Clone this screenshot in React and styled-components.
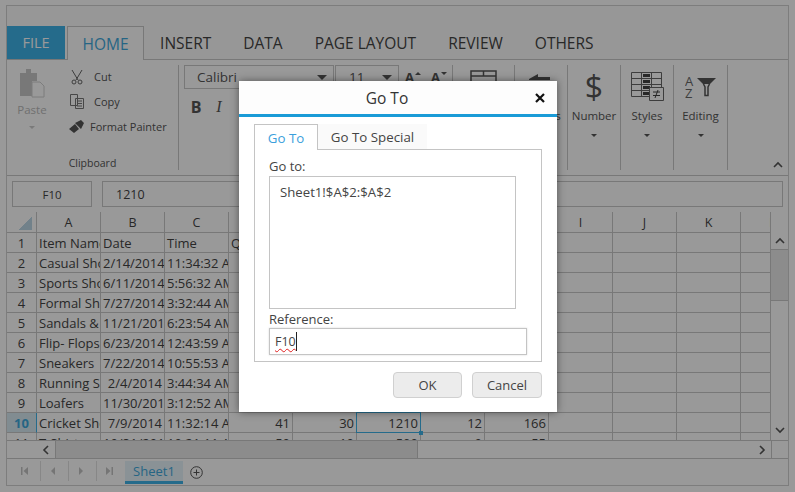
import React from "react";
import styled, { createGlobalStyle } from "styled-components";

const columns = ["A", "B", "C", "D", "E", "F", "G", "H", "I", "J", "K", "L"];
const rows = [
  ["Item Name", "Date", "Time", "Quantity"],
  ["Casual Shoes", "2/14/2014", "11:34:32 AM"],
  ["Sports Shoes", "6/11/2014", "5:56:32 AM"],
  ["Formal Shoes", "7/27/2014", "3:32:44 AM"],
  ["Sandals &", "11/21/2014", "6:23:54 AM"],
  ["Flip- Flops", "6/23/2014", "12:43:59 AM"],
  ["Sneakers", "7/22/2014", "10:55:53 AM"],
  ["Running Shoes", "2/4/2014", "3:44:34 AM"],
  ["Loafers", "11/30/2014", "3:12:52 AM"],
  ["Cricket Shoes", "7/9/2014", "11:32:14 AM", "41", "30", "1210", "12", "166"],
  ["T-Shirts", "10/31/2014", "10:21:11 AM", "50", "10", "500", "9", "55"],
];
const rightAligned = { "2/4/2014": true, "7/9/2014": true };

const GlobalStyle = createGlobalStyle`
  html, body {
    margin: 0;
    height: 100%;
    overflow: hidden;
    background: #fff;
    font-family: "Open Sans", "Liberation Sans", sans-serif;
  }
  * { box-sizing: border-box; }
`;

const Page = styled.div`
  width: 795px;
  height: 492px;
  position: relative;
  overflow: hidden;
  background: #fff;
  padding: 5px 0 0 6px;
`;
const Sheet = styled.div`
  width: 783px;
  height: 481px;
  background: #fff;
  border: 1px solid #d0d0d0;
  display: flex;
  flex-direction: column;
  isolation: isolate;
`;
const TabBar = styled.div`
  height: 54px;
  flex: none;
  padding-top: 20px;
  display: flex;
  align-items: flex-start;
  background: #fcfcfc;
  border-bottom: 1px solid #c8c8c8;
`;
const FileTab = styled.div`
  width: 58px;
  height: 33px;
  background: #3fb2e8;
  color: #fff;
  font-size: 14.5px;
  display: flex;
  align-items: center;
  justify-content: center;
`;
const Tab = styled.div`
  padding: 0 ${(p) => (p.$active ? "14.500px" : "16px")};
  height: 34px;
  margin-left: ${(p) => (p.$active ? "2px" : 0)};
  font-size: 15.5px;
  display: flex;
  align-items: center;
  color: ${(p) => (p.$active ? "#3fa9dd" : "#444")};
  background: ${(p) => (p.$active ? "#fff" : "transparent")};
  border: ${(p) => (p.$active ? "1px solid #c8c8c8" : "0")};
  border-bottom: 0;
`;
const Ribbon = styled.div`
  height: 116px;
  flex: none;
  display: flex;
  position: relative;
  border-bottom: 1px solid #c8c8c8;
  padding-top: 5px;
`;
const Group = styled.div`
  width: ${(p) => p.$w}px;
  height: 105px;
  border-right: 1px solid #c8c8c8;
  flex: none;
  display: flex;
  flex-direction: column;
  align-items: center;
  font-size: 12px;
  color: #555;
`;
const Clipboard = styled(Group)`
  align-items: stretch;
`;
const ClipTools = styled.div`
  display: flex;
  height: 93px;
`;
const PasteCol = styled.div`
  width: 50px;
  display: flex;
  flex-direction: column;
  align-items: center;
  color: #bbb;
  padding-top: 3px;
  font-size: 11.5px;
  gap: 3px;
`;
const ClipList = styled.div`
  display: flex;
  flex-direction: column;
  gap: 6px;
  margin-left: 13px;
  padding-top: 2px;
  font-size: 11px;
`;
const ClipItem = styled.div`
  height: 19px;
  display: flex;
  align-items: center;
  gap: ${(p) => (p.$brush ? "6px" : "10px")};
  margin-left: ${(p) => (p.$brush ? "-1px" : 0)};
  white-space: nowrap;
`;
const GroupName = styled.div`
  text-align: center;
  font-size: 10.5px;
  padding-top: 2px;
`;
const FontCol = styled.div`
  padding: 0 0 0 5px;
  width: 100%;
  display: flex;
  flex-direction: column;
  gap: 8px;
  font-size: 13.5px;
`;
const FontRow = styled.div`
  display: flex;
  gap: ${(p) => p.$gap}px;
  align-items: center;
  padding-left: ${(p) => p.$pad || 0}px;
`;
const FontBox = styled.div`
  width: ${(p) => p.$w}px;
  height: 24px;
  border: 1px solid #c8c8c8;
  display: flex;
  align-items: center;
  justify-content: space-between;
  padding: 0 6px 0 ${(p) => p.$pad}px;
  flex: none;
`;
const StyleGlyph = styled.span`
  font-family: ${(p) => (p.$i ? '"Liberation Serif", serif' : '"Open Sans", sans-serif')};
  font-size: 16px;
  height: 20px;
  line-height: 20px;
  width: 20px;
  text-align: center;
  font-weight: ${(p) => (p.$b ? 700 : 400)};
  font-style: ${(p) => (p.$i ? "italic" : "normal")};
`;
const SizeGlyph = styled.span`
  font-size: 13px;
  font-weight: 700;
  width: 22px;
  margin-left: ${(p) => p.$left}px;
  flex: none;
  display: flex;
  align-items: flex-start;
  gap: 1px;
`;
const MiniCaret = styled.span`
  margin-top: 4px;
  width: 0;
  height: 0;
  border-left: 3px solid transparent;
  border-right: 3px solid transparent;
  border-${(p) => (p.$up ? "bottom" : "top")}: 3px solid #555;
`;
const BigGroup = styled(Group)`
  padding-top: 5px;
`;
const BigIcon = styled.div`
  height: 33px;
  display: flex;
  align-items: ${(p) => (p.$top ? "flex-start" : "center")};
  justify-content: center;
  font-size: ${(p) => p.$size || 12}px;
`;
const BigLabel = styled.div`
  margin-top: 5px;
  font-size: 11.5px;
  white-space: nowrap;
`;
const Caret = styled.div`
  margin-top: ${(p) => (p.$box ? 0 : "11px")};
  width: 0;
  height: 0;
  border-left: ${(p) => (p.$box ? 5 : 3)}px solid transparent;
  border-right: ${(p) => (p.$box ? 5 : 3)}px solid transparent;
  border-top: ${(p) => (p.$box ? 5 : 3)}px solid #555;
`;
const PasteCaret = styled(Caret)`
  margin-top: 6px;
  border-top-color: #ccc;
`;
const Collapse = styled.div`
  position: absolute;
  right: 5px;
  bottom: 5px;
  width: 10px;
  height: 10px;
  display: flex;
`;
const FormulaBar = styled.div`
  height: 36px;
  flex: none;
  display: flex;
  padding: 5px;
  gap: 10px;
`;
const NameBox = styled.div`
  width: 80px;
  height: 26px;
  border: 1px solid #c8c8c8;
  font-size: 11.5px;
  color: #444;
  display: flex;
  align-items: center;
  justify-content: center;
`;
const FormulaBox = styled.div`
  flex: 1;
  height: 26px;
  border: 1px solid #c8c8c8;
  font-size: 12.5px;
  color: #444;
  display: flex;
  align-items: center;
  padding-left: 13px;
`;
const GridWrap = styled.div`
  height: 228px;
  flex: none;
  display: flex;
`;
const GridArea = styled.div`
  width: 763px;
  flex: none;
  overflow: hidden;
  display: grid;
  grid-template-columns: 30px repeat(12, 64px);
  grid-template-rows: 21px;
  grid-auto-rows: 20px;
  align-content: start;
  font-size: 13px;
  color: #444;
`;
const Corner = styled.div`
  background: linear-gradient(135deg, transparent 50%, #bcd7e6 50%) no-repeat 12px 5px / 13px 13px;
  border-right: 1px solid #c8c8c8;
  border-bottom: 1px solid #c8c8c8;
`;
const ColHead = styled.div`
  border-right: 1px solid #c8c8c8;
  border-bottom: 1px solid #c8c8c8;
  font-size: 12.5px;
  display: flex;
  align-items: center;
  justify-content: center;
`;
const RowHead = styled.div`
  display: flex;
  align-items: center;
  justify-content: center;
  font-size: 13px;
  border-right: 1px solid ${(p) => (p.$active ? "#3fb2e8" : "#c8c8c8")};
  border-bottom: 1px solid #c8c8c8;
  background: ${(p) => (p.$active ? "#d8e9f2" : "transparent")};
  color: ${(p) => (p.$active ? "#3fa9dd" : "#444")};
  font-weight: ${(p) => (p.$active ? 700 : 400)};
`;
const Cell = styled.div`
  position: relative;
  border-right: 1px solid #c8c8c8;
  border-bottom: 1px solid #c8c8c8;
  white-space: nowrap;
  overflow: ${(p) => (p.$sel ? "visible" : "hidden")};
  padding: 0 2px;
  display: flex;
  align-items: center;
  justify-content: ${(p) => (p.$right ? "flex-end" : "flex-start")};
`;
const Selected = styled.div`
  position: absolute;
  z-index: 1;
  inset: -1px;
  border: 1px solid #3fb2e8;
`;
const Handle = styled.div`
  position: absolute;
  right: -3px;
  bottom: -3px;
  width: 4px;
  height: 4px;
  background: #3fb2e8;
`;
const VScroll = styled.div`
  flex: 1;
  border-left: 1px solid #c8c8c8;
  display: flex;
  flex-direction: column;
  align-items: center;
`;
const ArrowTop = styled.div`
  height: 37px;
  padding-bottom: 3px;
  display: flex;
  align-items: flex-end;
  justify-content: center;
`;
const ArrowBottom = styled.div`
  height: 21px;
  display: flex;
  align-items: center;
  justify-content: center;
  margin-top: auto;
`;
const Thumb = styled.div`
  width: 100%;
  height: 52px;
  background: #eaeaea;
  border-top: 1px solid #c8c8c8;
  border-bottom: 1px solid #c8c8c8;
`;
const HScroll = styled.div`
  height: 19px;
  display: flex;
  border-top: 1px solid #c8c8c8;
  border-bottom: 1px solid #c8c8c8;
  flex: none;
`;
const HSpacer = styled.div`
  width: 30px;
`;
const HArrow = styled.div`
  width: 18px;
  display: flex;
  align-items: center;
  justify-content: center;
`;
const HThumb = styled.div`
  width: 363px;
  flex: none;
  background: #eaeaea;
  border-left: 1px solid #c8c8c8;
  border-right: 1px solid #c8c8c8;
`;
const HTrack = styled.div`
  flex: 1;
`;
const HEnd = styled.div`
  width: 17px;
  border-left: 1px solid #c8c8c8;
`;
const SheetBar = styled.div`
  flex: 1;
  display: flex;
  align-items: flex-start;
  padding: 2px 0 0 6px;
`;
const NavButton = styled.div`
  width: 28px;
  height: 20px;
  padding-right: 4px;
  display: flex;
  align-items: center;
  justify-content: center;
  border-right: 1px solid ${(p) => (p.$last ? "transparent" : "#e2e2e2")};
`;
const SheetTab = styled.div`
  width: 58px;
  height: 23px;
  background: #e6f3fa;
  border-bottom: 3px solid #3fb2e8;
  color: #3fa9dd;
  font-size: 13px;
  display: flex;
  align-items: center;
  justify-content: center;
`;
const AddSheet = styled.div`
  margin: 5px 0 0 7px;
  display: flex;
`;

const Overlay = styled.div`
  position: absolute;
  inset: 0;
  background: rgba(0, 0, 0, 0.4);
`;
const Dialog = styled.div`
  position: absolute;
  left: 239px;
  top: 81px;
  width: 318px;
  height: 331px;
  background: #fff;
  box-shadow: 0 0 8px rgba(0, 0, 0, 0.45);
  display: flex;
  flex-direction: column;
`;
const DialogHead = styled.div`
  height: 36px;
  flex: none;
  background: #fdfdfd;
  border-bottom: 3px solid #1a9bd7;
  padding-right: 22px;
  display: flex;
  align-items: center;
  justify-content: center;
  position: relative;
  font-size: 15.5px;
  color: #333;
`;
const CloseBtn = styled.svg`
  position: absolute;
  right: 12px;
  top: 12px;
`;
const DialogBody = styled.div`
  padding: 7px 15px 0;
  display: flex;
  flex-direction: column;
`;
const DialogTabs = styled.div`
  display: flex;
  height: 25px;
  position: relative;
  z-index: 1;
`;
const DialogTab = styled.div`
  width: ${(p) => p.$w}px;
  height: ${(p) => (p.$active ? "26px" : "25px")};
  font-size: 13.3px;
  display: flex;
  align-items: center;
  justify-content: center;
  color: ${(p) => (p.$active ? "#3b9fdc" : "#444")};
  background: ${(p) => (p.$active ? "#fff" : "#fafafa")};
  border: ${(p) => (p.$active ? "1px solid #c4c4c4" : "0")};
  border-bottom: 0;
`;
const TabPanel = styled.div`
  height: 213px;
  border: 1px solid #c4c4c4;
  padding: 8px 14px 0;
  display: flex;
  flex-direction: column;
  color: #444;
  font-size: 13px;
`;
const Label = styled.div`
  height: 17px;
  line-height: 17px;
`;
const RefArea = styled.div`
  margin-top: 1px;
  width: 247px;
  height: 133px;
  border: 1px solid #c4c4c4;
  padding: 6px 10px;
  line-height: 18px;
  font-size: 13.2px;
`;
const RefLabel = styled(Label)`
  margin-top: 2px;
`;
const RefInput = styled.div`
  width: 258px;
  height: 27px;
  border: 1px solid #c4c4c4;
  box-shadow: 0 0 2px rgba(0, 0, 0, 0.15);
  padding-left: 5px;
  font-size: 12.5px;
  display: flex;
  align-items: center;
`;
const Misspelt = styled.span`
  text-decoration: underline wavy #e02020 1px;
  text-underline-offset: 2px;
`;
const Cursor = styled.span`
  width: 1px;
  height: 19px;
  background: #222;
`;
const Footer = styled.div`
  display: flex;
  justify-content: flex-end;
  gap: 10px;
  margin-top: 10px;
`;
const Btn = styled.div`
  width: ${(p) => p.$w}px;
  height: 26px;
  background: #ececec;
  border: 1px solid #d0d0d0;
  border-radius: 4px;
  font-size: 13px;
  color: #444;
  display: flex;
  align-items: center;
  justify-content: center;
`;

const Chevron = ({ dir }) => {
  const d = { up: "M1 7l4-4 4 4", down: "M1 3l4 4 4-4", left: "M7 1L3 5l4 4", right: "M3 1l4 4-4 4" }[dir];
  return (
    <svg width="10" height="10" viewBox="0 0 10 10">
      <path d={d} fill="none" stroke="#555" strokeWidth="1.6" />
    </svg>
  );
};

function Nav({ kind }) {
  const paths = {
    first: "M1 1h1.500v8H1zM8 1L3.500 5 8 9z",
    prev: "M7 1L3 5l4 4z",
    next: "M3 1l4 4-4 4z",
    last: "M2 1l4.500 4L2 9zM7.500 1H9v8H7.500z",
  };
  return (
    <svg width="10" height="10" viewBox="0 0 10 10">
      <path d={paths[kind]} fill="#c4c4c4" />
    </svg>
  );
}

export default function App() {
  return (
    <Page>
      <GlobalStyle />
      <Sheet>
        <TabBar>
          <FileTab>FILE</FileTab>
          <Tab $active>HOME</Tab>
          <Tab>INSERT</Tab>
          <Tab>DATA</Tab>
          <Tab>PAGE LAYOUT</Tab>
          <Tab>REVIEW</Tab>
          <Tab>OTHERS</Tab>
        </TabBar>
        <Ribbon>
          <Clipboard $w={172}>
            <ClipTools>
              <PasteCol>
                <svg width="26" height="31" viewBox="0 0 26 31">
                  <path d="M1 5h6V1h5v4h6v8h-5v15H1z" fill="#c8c8c8" />
                  <path d="M13 14h8l4 4v11H13z" fill="#fff" stroke="#d0d0d0" />
                </svg>
                Paste
                <PasteCaret />
              </PasteCol>
              <ClipList>
                <ClipItem>
                  <svg width="14" height="16" viewBox="0 0 14 16">
                    <path d="M2 1l6 10M12 1L6 11" stroke="#666" fill="none" />
                    <circle cx="4" cy="13" r="2" stroke="#666" fill="none" />
                    <circle cx="10" cy="13" r="2" stroke="#666" fill="none" />
                  </svg>
                  Cut
                </ClipItem>
                <ClipItem>
                  <svg width="14" height="15" viewBox="0 0 14 15">
                    <path d="M.5.5h7v11h-7zM5.500 4.500h8v10h-8zM7 7h5M7 9.500h5M7 12h5" stroke="#777" fill="#fff" />
                  </svg>
                  Copy
                </ClipItem>
                <ClipItem $brush>
                  <svg width="15" height="13" viewBox="0 0 15 13">
                    <path d="M6 3l6-3 3 3-3 6zM0 9l6-5 4 5-5 4z" fill="#555" />
                  </svg>
                  Format Painter
                </ClipItem>
              </ClipList>
            </ClipTools>
            <GroupName>Clipboard</GroupName>
          </Clipboard>
          <Group $w={274}>
            <FontCol>
              <FontRow $gap={1}>
                <FontBox $w={150} $pad={12}>
                  Calibri
                  <Caret $box />
                </FontBox>
                <FontBox $w={64} $pad={13}>
                  11
                  <Caret $box />
                </FontBox>
                <SizeGlyph $left={5}>A<MiniCaret $up /></SizeGlyph>
                <SizeGlyph $left={3}>A<MiniCaret /></SizeGlyph>
              </FontRow>
              <FontRow $gap={3} $pad={2}>
                <StyleGlyph $b>B</StyleGlyph>
                <StyleGlyph $i>I</StyleGlyph>
              </FontRow>
            </FontCol>
          </Group>
          <BigGroup $w={62}>
            <BigIcon $top>
              <svg width="27" height="26" viewBox="0 0 27 26">
                <path d="M1 1h25v24H1zM1 6h25M13.500 1v5" fill="none" stroke="#555" strokeWidth="1.500" />
              </svg>
            </BigIcon>
          </BigGroup>
          <BigGroup $w={53}>
            <BigIcon $top>
              <svg width="24" height="20" viewBox="0 0 24 20">
                <path d="M0 9l9-5v3h12v3H0z" fill="#555" />
              </svg>
            </BigIcon>
            <BigLabel>Actions</BigLabel>
          </BigGroup>
          <BigGroup $w={53}>
            <BigIcon $size={32}>$</BigIcon>
            <BigLabel>Number</BigLabel>
            <Caret />
          </BigGroup>
          <BigGroup $w={53}>
            <BigIcon>
              <svg width="33" height="29" viewBox="0 0 33 29">
                <path d="M.5.5h30v24H.5zM.5 6.500h30M.5 12.500h30M.5 18.500h30M10.500.5v24M20.500.5v24" fill="none" stroke="#666" />
                <path d="M12 2h7v3h-7zM12 8h7v3h-7zM12 14h7v3h-7zM12 20h7v3h-7z" fill="#444" />
                <path d="M18.500 15.500h14v13h-14z" fill="#fff" stroke="#666" />
                <path d="M22 20h7M22 23.500h7M27 18l-3 8" stroke="#444" fill="none" />
              </svg>
            </BigIcon>
            <BigLabel>Styles</BigLabel>
            <Caret />
          </BigGroup>
          <BigGroup $w={54}>
            <BigIcon>
              <svg width="32" height="24" viewBox="0 0 32 24">
                <text x="0" y="11" fontSize="13" fill="#666" fontFamily="Open Sans">A</text>
                <text x="0" y="23" fontSize="13" fill="#666" fontFamily="Open Sans">Z</text>
                <path d="M12 3h19l-6 6H18z" fill="#555" />
                <path d="M18.500 9l1.500 3v8.500h3V12l1.500-3" fill="none" stroke="#555" strokeWidth="1.500" />
              </svg>
            </BigIcon>
            <BigLabel>Editing</BigLabel>
            <Caret />
          </BigGroup>
          <Collapse>
            <Chevron dir="up" />
          </Collapse>
        </Ribbon>
        <FormulaBar>
          <NameBox>F10</NameBox>
          <FormulaBox>1210</FormulaBox>
        </FormulaBar>
        <GridWrap>
          <GridArea>
            <Corner />
            {columns.map((c) => (
              <ColHead key={c}>{c}</ColHead>
            ))}
            {rows.map((row, r) => (
              <React.Fragment key={r}>
                <RowHead $active={r === 9}>{r + 1}</RowHead>
                {columns.map((c, i) => {
                  const text = row[i] || "";
                  const right = (i > 2 && r > 0) || rightAligned[text];
                  const sel = r === 9 && c === "F";
                  return (
                    <Cell key={c} $right={right} $sel={sel}>
                      {text}
                      {sel && (
                        <Selected>
                          <Handle />
                        </Selected>
                      )}
                    </Cell>
                  );
                })}
              </React.Fragment>
            ))}
          </GridArea>
          <VScroll>
            <ArrowTop><Chevron dir="up" /></ArrowTop>
            <Thumb />
            <ArrowBottom><Chevron dir="down" /></ArrowBottom>
          </VScroll>
        </GridWrap>
        <HScroll>
          <HSpacer />
          <HArrow><Chevron dir="left" /></HArrow>
          <HThumb />
          <HTrack />
          <HArrow><Chevron dir="right" /></HArrow>
          <HEnd />
        </HScroll>
        <SheetBar>
          <NavButton><Nav kind="first" /></NavButton>
          <NavButton><Nav kind="prev" /></NavButton>
          <NavButton><Nav kind="next" /></NavButton>
          <NavButton $last><Nav kind="last" /></NavButton>
          <SheetTab>Sheet1</SheetTab>
          <AddSheet>
            <svg width="13" height="13" viewBox="0 0 13 13">
              <circle cx="6.500" cy="6.500" r="5.800" fill="none" stroke="#555" />
              <path d="M3.500 6.500h6M6.500 3.500v6" stroke="#555" />
            </svg>
          </AddSheet>
        </SheetBar>
      </Sheet>
      <Overlay />
      <Dialog>
        <DialogHead>
          Go To
          <CloseBtn width="10" height="10" viewBox="0 0 10 10">
            <path d="M1 1l8 8M9 1L1 9" stroke="#111" strokeWidth="2.200" />
          </CloseBtn>
        </DialogHead>
        <DialogBody>
          <DialogTabs>
            <DialogTab $active $w={64}>Go To</DialogTab>
            <DialogTab $w={109}>Go To Special</DialogTab>
          </DialogTabs>
          <TabPanel>
            <Label>Go to:</Label>
            <RefArea>Sheet1!$A$2:$A$2</RefArea>
            <RefLabel>Reference:</RefLabel>
            <RefInput>
              <Misspelt>F10</Misspelt>
              <Cursor />
            </RefInput>
          </TabPanel>
          <Footer>
            <Btn $w={69}>OK</Btn>
            <Btn $w={70}>Cancel</Btn>
          </Footer>
        </DialogBody>
      </Dialog>
    </Page>
  );
}
